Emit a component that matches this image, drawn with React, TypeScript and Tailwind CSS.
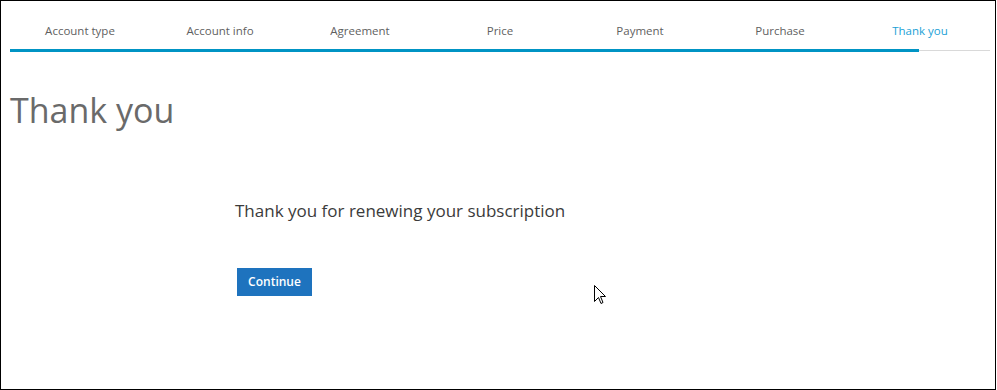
import React from "react";

const steps = [
  "Account type",
  "Account info",
  "Agreement",
  "Price",
  "Payment",
  "Purchase",
  "Thank you",
];

function Pointer() {
  return (
    <svg
      width="12"
      height="20"
      viewBox="0 0 12 20"
      className="absolute left-[593px] top-[284px]"
    >
      <path
        d="M0.5 0.5 L0.5 16.5 L4.5 12.5 L7 18.5 L9 17.5 L6.5 11.5 L11.5 11.5 Z"
        fill="#fff"
        stroke="#000"
        strokeWidth="1"
        strokeLinejoin="miter"
      />
    </svg>
  );
}

export default function App() {
  const active = steps.length - 1;

  return (
    <div
      className="relative w-[996px] h-[390px] border border-black bg-white"
      style={{ fontFamily: '"Open Sans", "Noto Sans", sans-serif' }}
    >
      {/* wizard steps */}
      <div className="ml-[9px] w-[980px]">
        <div className="grid grid-cols-7 h-[48px] pt-[22px]">
          {steps.map((s, i) => (
            <div
              key={s}
              className={
                "text-center text-[11.5px] leading-4 " +
                (i === active ? "text-[#1a9fd6]" : "text-[#5f5f5f]")
              }
            >
              {s}
            </div>
          ))}
        </div>
        <div className="flex items-center h-[3px]">
          <div className="w-[909px] h-[3px] bg-[#0094c4]" />
          <div className="flex-1 h-px bg-[#d9d9d9]" />
        </div>
      </div>

      <h1 className="ml-[9px] mt-[36px] text-[34px] leading-[44px] text-[#6a6a6a] font-normal">
        Thank you
      </h1>

      <div className="ml-[234px] mt-[67px]">
        <p className="text-[17px] leading-6 text-[#3b3b3b]">
          Thank you for renewing your subscription
        </p>
        <button className="mt-[45px] ml-[2px] w-[75px] h-[28px] bg-[#1e73be] text-white text-[12px] font-semibold">
          Continue
        </button>
      </div>

      <Pointer />
    </div>
  );
}
